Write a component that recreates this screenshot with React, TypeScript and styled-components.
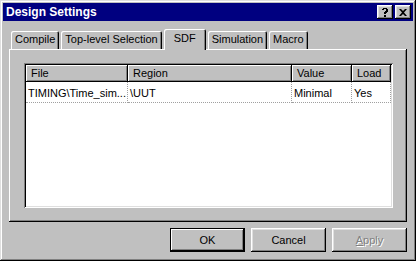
import { createGlobalStyle } from 'styled-components'
import styled from 'styled-components'

const GlobalStyle = createGlobalStyle`
  html, body {
    margin: 0;
    padding: 0;
    background: #c0c0c0;
  }
  * {
    box-sizing: border-box;
  }
`

const face = '#c0c0c0'
const font = `'Liberation Sans', Arial, sans-serif`

const Window = styled.div`
  width: 416px;
  height: 261px;
  padding: 3px;
  display: flex;
  flex-direction: column;
  background: ${face};
  font-family: ${font};
  font-size: 11px;
  color: #000;
  box-shadow: inset -1px -1px #000, inset 1px 1px #dfdfdf, inset -2px -2px #808080, inset 2px 2px #fff;
`

const TitleBar = styled.div`
  height: 18px;
  background: #000080;
  display: flex;
  align-items: center;
  padding: 0 2px 0 3px;
`

const Title = styled.div`
  flex: 1;
  color: #fff;
  font-weight: bold;
  font-size: 12px;
`

const CaptionButton = styled.div<{ $gap?: number }>`
  width: 16px;
  height: 14px;
  margin-left: ${({ $gap }) => $gap ?? 0}px;
  background: ${face};
  display: flex;
  align-items: center;
  justify-content: center;
  box-shadow: inset -1px -1px #000, inset 1px 1px #fff, inset -2px -2px #808080, inset 2px 2px #dfdfdf;
`

const Body = styled.div`
  flex: 1;
  display: flex;
  flex-direction: column;
  padding: 8px 6px 6px 6px;
`

const TabRow = styled.div`
  display: flex;
  align-items: flex-end;
  height: 20px;
  padding-left: 2px;
  position: relative;
  z-index: 1;
`

const Tab = styled.div<{ $active?: boolean }>`
  height: ${({ $active }) => ($active ? 21 : 18)}px;
  margin: ${({ $active }) => ($active ? '0 2px -1px 0' : '0 2px 0 0')};
  padding: ${({ $active }) => ($active ? '3px 10px 0 10px' : '2px 4px 0 4px')};
  background: ${face};
  border-top-left-radius: 2px;
  border-top-right-radius: 2px;
  box-shadow: inset 1px 1px #fff, inset -1px 0 #000, inset -2px 0 #808080;
  white-space: nowrap;
  z-index: ${({ $active }) => ($active ? 2 : 0)};
`

const Panel = styled.div`
  flex: 1;
  padding: 14px 14px 14px 15px;
  display: flex;
  box-shadow: inset -1px -1px #000, inset 1px 1px #fff, inset -2px -2px #808080;
`

const ListView = styled.div`
  flex: 1;
  background: #fff;
  padding: 2px;
  box-shadow: inset 1px 1px #808080, inset -1px -1px #fff, inset 2px 2px #000, inset -2px -2px #dfdfdf;
  display: flex;
  flex-direction: column;
`

const ListRow = styled.div`
  display: flex;
`

const HeaderCell = styled.div<{ $w: number }>`
  width: ${({ $w }) => $w}px;
  height: 17px;
  padding: 2px 0 0 5px;
  background: ${face};
  box-shadow: inset -1px -1px #000, inset 1px 1px #fff, inset -2px -2px #808080;
  white-space: nowrap;
`

const Cell = styled.div<{ $w: number }>`
  width: ${({ $w }) => $w}px;
  height: 21px;
  padding: 5px 0 0 2px;
  border-bottom: 1px dotted #a0a0a0;
  border-right: 1px dotted #a0a0a0;
  white-space: nowrap;
  overflow: hidden;
`

const ButtonRow = styled.div`
  display: flex;
  justify-content: flex-end;
  gap: 6px;
  padding-top: 6px;
`

const Button = styled.div<{ $default?: boolean; $disabled?: boolean }>`
  width: 75px;
  height: 24px;
  display: flex;
  align-items: center;
  justify-content: center;
  background: ${face};
  color: ${({ $disabled }) => ($disabled ? '#808080' : '#000')};
  text-shadow: ${({ $disabled }) => ($disabled ? '1px 1px #fff' : 'none')};
  box-shadow: ${({ $default }) =>
    $default
      ? 'inset -1px -1px #000, inset 1px 1px #000, inset -2px -2px #000, inset 2px 2px #fff, inset -3px -3px #808080'
      : 'inset -1px -1px #000, inset 1px 1px #fff, inset -2px -2px #808080, inset 2px 2px #dfdfdf'};
`

const columns = [
  { name: 'File', w: 102, value: 'TIMING\\Time_sim...' },
  { name: 'Region', w: 164, value: '\\UUT' },
  { name: 'Value', w: 60, value: 'Minimal' },
  { name: 'Load', w: 39, value: 'Yes' },
]

const tabs = ['Compile', 'Top-level Selection', 'SDF', 'Simulation', 'Macro']

const App = () => {
  return (
    <>
      <GlobalStyle />
      <Window>
        <TitleBar>
          <Title>Design Settings</Title>
          <CaptionButton>
            <svg width="8" height="9" viewBox="0 0 8 9">
              <path d="M1 1h1V0h4v1h1v3H6v1H5v1H3V4h1V3h1V1H3v1H1z M3 7h2v2H3z" fill="#000" />
            </svg>
          </CaptionButton>
          <CaptionButton $gap={2}>
            <svg width="8" height="7" viewBox="0 0 8 7">
              <path d="M0 0h2l2 2 2-2h2L5 3.5 8 7H6L4 5 2 7H0l3-3.5z" fill="#000" />
            </svg>
          </CaptionButton>
        </TitleBar>
        <Body>
          <TabRow>
            {tabs.map((t) => (
              <Tab key={t} $active={t === 'SDF'}>
                {t}
              </Tab>
            ))}
          </TabRow>
          <Panel>
            <ListView>
              <ListRow>
                {columns.map((c) => (
                  <HeaderCell key={c.name} $w={c.w}>
                    {c.name}
                  </HeaderCell>
                ))}
              </ListRow>
              <ListRow>
                {columns.map((c) => (
                  <Cell key={c.name} $w={c.w}>
                    {c.value}
                  </Cell>
                ))}
              </ListRow>
            </ListView>
          </Panel>
          <ButtonRow>
            <Button $default>OK</Button>
            <Button>Cancel</Button>
            <Button $disabled>
              <span>
                <u>A</u>pply
              </span>
            </Button>
          </ButtonRow>
        </Body>
      </Window>
    </>
  )
}

export default App
